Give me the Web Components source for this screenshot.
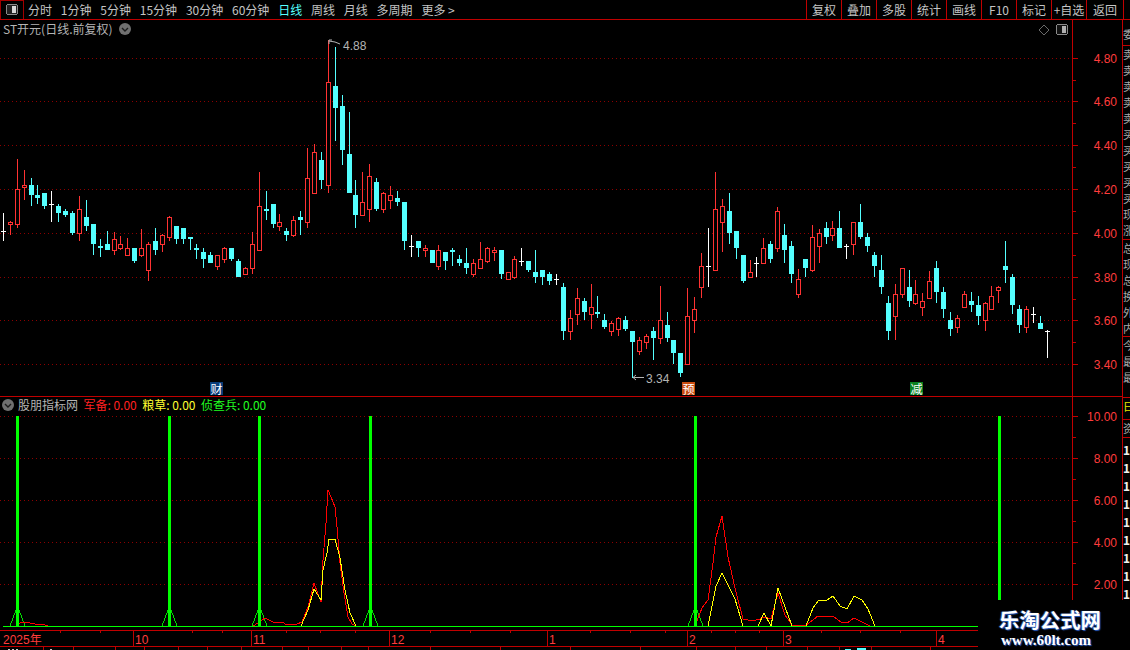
<!DOCTYPE html>
<html lang="zh-CN">
<head>
    <meta charset="UTF-8">
    <title>ST开元 K线</title>
    <style>
        html, body {
            margin: 0;
            height: 100%;
            background: #000;
            overflow: hidden;
        }
    </style>
</head>
<body>
<hq-app>
    <hq-toolbar slot="toolbar">
        <hq-tab slot="tabs">分时</hq-tab>
        <hq-tab slot="tabs">1分钟</hq-tab>
        <hq-tab slot="tabs">5分钟</hq-tab>
        <hq-tab slot="tabs">15分钟</hq-tab>
        <hq-tab slot="tabs">30分钟</hq-tab>
        <hq-tab slot="tabs">60分钟</hq-tab>
        <hq-tab slot="tabs" active>日线</hq-tab>
        <hq-tab slot="tabs">周线</hq-tab>
        <hq-tab slot="tabs">月线</hq-tab>
        <hq-tab slot="tabs">多周期</hq-tab>
        <hq-tab slot="tabs">更多 &gt;</hq-tab>
        <hq-tool slot="tools">复权</hq-tool>
        <hq-tool slot="tools">叠加</hq-tool>
        <hq-tool slot="tools">多股</hq-tool>
        <hq-tool slot="tools">统计</hq-tool>
        <hq-tool slot="tools">画线</hq-tool>
        <hq-tool slot="tools">F10</hq-tool>
        <hq-tool slot="tools">标记</hq-tool>
        <hq-tool slot="tools">+自选</hq-tool>
        <hq-tool slot="tools" wide>返回</hq-tool>
    </hq-toolbar>
    <hq-kline slot="kline"></hq-kline>
    <hq-indicator slot="indicator"></hq-indicator>
    <hq-time-axis slot="time"></hq-time-axis>
    <hq-status-strip slot="status"></hq-status-strip>
    <hq-side-strip slot="side"></hq-side-strip>
    <hq-watermark slot="watermark"></hq-watermark>
</hq-app>

<template id="app-tpl">
    <style>
        :host {
            display: grid;
            position: relative;
            width: 1130px;
            height: 650px;
            overflow: hidden;
            background: #000;
            font-family: "Noto Sans CJK SC", "Liberation Sans", sans-serif;
            font-size: 12px;
            grid-template-columns: 1123px 7px;
            grid-template-rows: 20px 377px 230px 20px 3px;
        }
        .top { grid-column: 1 / 3; grid-row: 1; }
        .kline { grid-column: 1; grid-row: 2; }
        .indicator { grid-column: 1; grid-row: 3; }
        .time { grid-column: 1 / 3; grid-row: 4; }
        .status { grid-column: 1 / 3; grid-row: 5; }
        .side { grid-column: 2; grid-row: 2 / 4; min-height: 0; overflow: hidden; }
    </style>
    <div class="top"><slot name="toolbar"></slot></div>
    <div class="kline"><slot name="kline"></slot></div>
    <div class="indicator"><slot name="indicator"></slot></div>
    <div class="time"><slot name="time"></slot></div>
    <div class="status"><slot name="status"></slot></div>
    <div class="side"><slot name="side"></slot></div>
    <slot name="watermark"></slot>
</template>

<template id="toolbar-tpl">
    <style>
        :host {
            display: flex;
            height: 20px;
            box-sizing: border-box;
            border-bottom: 1px solid #c00000;
            color: #c4c4c4;
        }
        .switch {
            box-sizing: border-box;
            width: 24px;
            height: 19px;
            border: solid #a00000;
            border-width: 1px 1px 0 1px;
            display: flex;
            align-items: center;
            justify-content: center;
        }
        .tabs {
            display: flex;
            align-items: center;
            gap: 8.8px;
            margin-left: 4px;
            flex: 1;
        }
        .tools {
            display: flex;
            margin-right: 6px;
            border-left: 1px solid #c00000;
        }
    </style>
    <div class="switch">
        <svg width="13" height="12" viewBox="0 0 13 12" shape-rendering="crispEdges">
            <rect x="0.5" y="0.5" width="11" height="10" rx="2" fill="#222" stroke="#8a8a8a"/>
            <rect x="6" y="2" width="4" height="7" fill="#d8d8d8"/>
        </svg>
    </div>
    <div class="tabs"><slot name="tabs"></slot></div>
    <div class="tools"><slot name="tools"></slot></div>
</template>

<template id="tab-tpl">
    <style>
        :host { display: block; line-height: 16px; white-space: nowrap; }
        :host([active]) { color: #55ffff; }
    </style>
    <slot></slot>
</template>

<template id="tool-tpl">
    <style>
        :host {
            display: flex;
            align-items: center;
            justify-content: center;
            box-sizing: border-box;
            width: 35px;
            border-right: 1px solid #c00000;
            white-space: nowrap;
        }
        :host([wide]) { width: 37px; }
    </style>
    <slot></slot>
</template>

<template id="toggle-tpl">
    <style>
        :host { display: block; width: 12px; height: 12px; }
        svg { display: block; }
    </style>
    <svg width="12" height="12" viewBox="0 0 12 12">
        <circle cx="6" cy="6" r="6" fill="#707070"/>
        <path d="M3 5 L6 8 L9 5" fill="none" stroke="#1c1c1c" stroke-width="1.4"/>
    </svg>
</template>

<template id="badge-tpl">
    <style>
        :host {
            position: absolute;
            width: 13px;
            height: 13px;
            display: flex;
            align-items: center;
            justify-content: center;
            color: #fff;
            font-size: 12px;
            line-height: 13px;
        }
    </style>
    <slot></slot>
</template>

<template id="kline-tpl">
    <style>
        :host {
            display: block;
            position: relative;
            height: 377px;
            box-sizing: border-box;
            border-bottom: 1px solid #c00000;
        }
        .row { display: flex; height: 376px; }
        svg.chart { display: block; flex: none; }
        .title {
            position: absolute;
            left: 3px;
            top: 1px;
            display: flex;
            align-items: center;
            gap: 6px;
            color: #b4b4b4;
            line-height: 16px;
        }
        .marks {
            position: absolute;
            left: 1038px;
            top: 4px;
            display: flex;
            align-items: center;
            gap: 6px;
        }
        svg text { font-family: "Liberation Sans", sans-serif; font-size: 12px; }
    </style>
    <div class="row">
        <svg class="chart" width="1072" height="376" viewBox="0 20 1072 376" shape-rendering="crispEdges"></svg>
        <hq-axis></hq-axis>
    </div>
    <div class="title"><span>ST开元(日线.前复权)</span><hq-toggle></hq-toggle></div>
    <div class="marks">
        <svg width="12" height="12" viewBox="0 0 12 12">
            <path d="M6 1 L11 6 L6 11 L1 6 Z" fill="none" stroke="#6a6a6a"/>
        </svg>
        <svg width="13" height="12" viewBox="0 0 13 12" shape-rendering="crispEdges">
            <rect x="0.5" y="0.5" width="11" height="10" rx="2" fill="#111" stroke="#8a8a8a"/>
            <rect x="6" y="2" width="4" height="7" fill="#b0b0b0"/>
        </svg>
    </div>
    <hq-badge style="left:210px;top:362px;background:#0a3c78">财</hq-badge>
    <hq-badge style="left:682px;top:362px;background:#c84b10">预</hq-badge>
    <hq-badge style="left:910px;top:362px;background:#0a8020">减</hq-badge>
</template>

<template id="axis-tpl">
    <style>
        :host {
            display: block;
            width: 51px;
            flex: none;
            box-sizing: border-box;
            border-left: 1px solid #c00000;
            border-right: 1px solid #c00000;
        }
        svg { display: block; }
        text { font-family: "Liberation Sans", sans-serif; font-size: 12px; fill: #ff3c3c; text-anchor: end; }
    </style>
    <svg width="49" shape-rendering="crispEdges"></svg>
</template>

<template id="indicator-tpl">
    <style>
        :host {
            display: block;
            position: relative;
            height: 230px;
        }
        .row { display: flex; height: 230px; }
        svg.chart { display: block; flex: none; }
        .legend {
            position: absolute;
            left: 2px;
            top: 0;
            display: flex;
            align-items: center;
            line-height: 16px;
            white-space: nowrap;
            color: #b4b4b4;
        }
        .legend span { margin-left: 5.4px; }
        .legend .name { margin-left: 4px; }
        .r { color: #ff2020; }
        .y { color: #ffff30; }
        .g { color: #20ff20; }
    </style>
    <div class="row">
        <svg class="chart" width="1072" height="230" viewBox="0 397 1072 230" shape-rendering="crispEdges"></svg>
        <hq-axis></hq-axis>
    </div>
    <div class="legend">
        <hq-toggle></hq-toggle>
        <span class="name">股朋指标网</span>
        <span class="r">军备: 0.00</span>
        <span class="y">粮草: 0.00</span>
        <span class="g">侦查兵: 0.00</span>
    </div>
</template>

<template id="time-tpl">
    <style>
        :host { display: block; height: 20px; }
        svg { display: block; }
        text { font-family: "Liberation Sans", "Noto Sans CJK SC", sans-serif; font-size: 12px; fill: #ff3c3c; }
    </style>
    <svg width="1130" height="20" viewBox="0 627 1130 20" shape-rendering="crispEdges"></svg>
</template>

<template id="status-tpl">
    <style>
        :host { display: block; height: 3px; }
        svg { display: block; }
    </style>
    <svg width="1130" height="3" viewBox="0 647 1130 3" shape-rendering="crispEdges"></svg>
</template>

<template id="side-tpl">
    <style>
        :host {
            display: flex;
            flex-direction: column;
            height: 607px;
            overflow: hidden;
            color: #a8a8a8;
            font-size: 11px;
            line-height: 16px;
            white-space: nowrap;
        }
        div { overflow: hidden; box-sizing: border-box; border-bottom: 1px solid #c00000; flex: none; }
        .hi { color: #f0f0f0; font-weight: 700; font-size: 12px; line-height: 18px; padding-top: 3px; }
        .yl { color: #e8e800; }
    </style>
    <div style="height:6px;border:0"></div>
    <div style="height:20px">委比</div>
    <div style="height:194px">卖五<br>卖四<br>卖三<br>卖二<br>卖一<br>买一<br>买二<br>买三<br>买四<br>买五<br>现价<br>涨跌</div>
    <div style="height:97px">总手<br>现手<br>总额<br>换手<br>外盘<br>内盘</div>
    <div style="height:61px">今开<br>最高<br>最低</div>
    <div style="height:22px" class="yl">日</div>
    <div style="height:18px">资</div>
    <div style="height:182px;border:0" class="hi">1<br>1<br>1<br>1<br>1<br>1<br>1<br>1<br>1</div>
</template>

<template id="watermark-tpl">
    <style>
        :host {
            position: absolute;
            left: 978px;
            top: 600px;
            width: 152px;
            height: 50px;
            background: #000;
            box-sizing: border-box;
            padding: 7px 0 0 21px;
            display: flex;
            flex-direction: column;
            color: #fff;
            white-space: nowrap;
        }
        .cn {
            font: 700 20.4px/24px "Noto Sans CJK SC", sans-serif;
            text-shadow: 1px 1px 1px #2a5cc0, -1px 0 1px #2a5cc0;
        }
        .en {
            font: 700 15px/17px "Liberation Serif", serif;
            margin: 1px 0 0 2px;
            text-shadow: 1px 1px 1px #2a5cc0;
        }
    </style>
    <span class="cn">乐淘公式网</span>
    <span class="en">www.60lt.com</span>
</template>

<script>
    const SVG_NS = 'http://www.w3.org/2000/svg';
    const RED = '#ff3232';
    const CYAN = '#54ffff';
    const LINE_RED = '#c00000';
    const DOT_RED = '#8c0000';

    function el(parent, name, attrs, text) {
        const node = document.createElementNS(SVG_NS, name);
        for (const key in attrs) node.setAttribute(key, attrs[key]);
        if (text !== undefined) node.textContent = text;
        parent.appendChild(node);
        return node;
    }

    function rect(parent, x, y, w, h, fill) {
        return el(parent, 'rect', {x, y, width: w, height: h, fill});
    }

    function dotted(parent, y, x1, x2) {
        el(parent, 'line', {
            x1, x2, y1: y + 0.5, y2: y + 0.5,
            stroke: DOT_RED, 'stroke-dasharray': '1 3'
        });
    }

    // kind, wick top, wick bottom, body top, body bottom (page pixels)
    const candles = [
        ['w',213,241,231,231],['r',221,235,222,225],['r',159,228,189,225],['r',170,200,185,188],
        ['c',178,206,185,195],['c',185,204,195,198],['c',193,209,193,206],['w',191,222,204,204],
        ['c',204,222,206,213],['c',209,217,211,215],['c',211,235,213,233],['r',196,241,209,234],
        ['c',200,231,217,226],['c',224,255,224,244],['c',239,257,246,248],['c',231,250,244,250],
        ['r',232,255,239,251],['r',236,250,244,249],['r',238,256,248,256],['c',248,263,248,261],
        ['r',229,257,248,256],['r',242,281,244,271],['c',228,255,241,250],['r',234,252,235,245],
        ['r',216,241,217,238],['c',226,244,226,239],['c',228,244,228,239],['c',237,250,237,239],
        ['c',244,259,248,250],['c',248,268,252,259],['c',252,263,255,263],['r',255,270,255,267],
        ['r',247,263,248,260],['c',248,261,248,259],['c',259,277,261,277],['r',267,275,268,275],
        ['r',232,274,244,269],['r',172,251,206,251],['c',191,220,209,211],['c',204,228,204,224],
        ['r',214,231,222,227],['c',228,241,231,235],['r',216,237,220,236],['c',211,235,217,220],
        ['r',148,228,178,223],['r',144,194,152,194],['c',152,189,160,180],['r',40,193,82,186],
        ['c',47,141,86,108],['c',95,165,106,150],['c',112,193,154,193],['c',180,228,195,215],
        ['r',172,216,202,216],['r',164,222,176,210],['c',178,211,182,209],['r',192,213,193,210],
        ['r',186,209,195,201],['c',191,206,198,202],['c',202,250,202,241],['w',235,257,246,246],
        ['c',241,257,241,248],['r',245,257,248,251],['c',250,263,250,263],['r',245,270,250,267],
        ['c',252,270,252,261],['c',248,266,250,252],['c',255,266,259,263],['c',248,274,263,268],
        ['r',259,277,263,275],['r',242,269,259,269],['r',247,263,248,262],['r',247,261,250,253],
        ['c',250,279,250,274],['r',272,280,272,280],['r',256,279,259,278],['w',248,266,261,261],
        ['c',261,272,261,270],['c',250,283,272,277],['c',270,285,270,277],['c',272,285,274,281],
        ['w',274,285,279,279],['c',283,340,287,331],['r',310,340,318,332],['r',288,325,298,315],
        ['c',298,320,301,312],['r',284,329,307,315],['c',296,318,312,314],['c',314,329,320,327],
        ['r',321,336,323,332],['r',317,336,318,330],['c',316,331,320,329],['c',331,378,331,342],
        ['r',337,355,340,352],['r',334,349,336,343],['c',327,360,331,338],['r',286,344,320,339],
        ['c',312,342,325,338],['c',340,364,340,353],['c',353,377,353,373],['r',288,365,316,365],
        ['r',297,333,309,321],['r',253,298,266,288],['w',228,287,266,266],['r',172,271,209,271],
        ['r',199,252,206,223],['c',193,244,211,233],['c',231,259,231,248],['c',255,283,255,281],
        ['r',260,278,272,278],['w',257,277,263,263],['r',238,264,248,264],['c',241,263,244,259],
        ['r',207,252,211,249],['c',224,263,235,250],['c',241,283,246,274],['r',269,298,279,295],
        ['c',259,277,259,268],['r',225,272,237,271],['r',229,263,233,247],['c',222,244,228,237],
        ['r',221,241,228,236],['c',211,248,228,248],['w',244,259,246,246],['r',222,255,222,245],
        ['c',204,239,222,237],['c',233,252,237,246],['c',252,277,255,266],['c',255,294,270,287],
        ['c',296,340,303,331],['r',284,340,294,317],['r',268,298,268,295],['c',270,307,287,301],
        ['r',280,305,294,304],['r',293,316,301,308],['r',271,299,281,299],['c',261,303,268,292],
        ['c',287,318,292,309],['c',312,336,320,329],['r',315,333,318,328],['r',291,308,294,308],
        ['c',292,312,301,305],['c',296,325,305,316],['r',302,331,303,321],['r',286,310,296,310],
        ['r',286,303,287,291],['c',241,283,266,270],['c',274,314,277,305],['c',305,333,309,325],
        ['r',306,333,309,328],['w',307,323,314,314],['c',316,329,323,329],['w',330,358,331,331]
    ];

    const redLines = [
        [[17,626],[20,623],[23,622],[30,623],[35,624],[42,624],[48,626]],
        [[253,626],[258,623],[265,618],[273,622],[282,622],[287,625],[297,624],[302,622],[308,607],[314,583],[321,602],[323,560],[326,523],[328,490],[331,497],[335,507],[337,527],[340,563],[344,593],[348,617],[352,624],[356,626]],
        [[696,623],[702,608],[708,600],[713,563],[716,537],[722,516],[728,557],[735,588],[743,619],[752,621],[760,619],[764,617],[771,619],[778,593],[785,615],[792,625],[805,626],[818,616],[827,617],[833,616],[841,622],[847,623],[854,618],[862,622],[870,626],[875,626]]
    ];
    const yellowLines = [
        [[301,626],[308,610],[314,589],[321,600],[323,570],[327,553],[329,539],[335,539],[340,558],[345,590],[350,613],[356,626]],
        [[708,626],[716,586],[722,573],[735,599],[743,626],[758,626],[764,613],[771,626],[778,588],[792,626],[806,626],[813,608],[819,600],[827,600],[833,596],[840,606],[847,609],[854,596],[862,600],[868,609],[875,626]]
    ];
    const signals = [16, 168, 258, 369, 694, 998];

    class ShadowBase extends HTMLElement {
        constructor() {
            super();
            const tpl = document.getElementById(this.constructor.tpl);
            this.attachShadow({mode: 'open'}).appendChild(tpl.content.cloneNode(true));
        }
    }

    class HqApp extends ShadowBase { static tpl = 'app-tpl'; }
    class HqToolbar extends ShadowBase { static tpl = 'toolbar-tpl'; }
    class HqTab extends ShadowBase { static tpl = 'tab-tpl'; }
    class HqTool extends ShadowBase { static tpl = 'tool-tpl'; }
    class HqToggle extends ShadowBase { static tpl = 'toggle-tpl'; }
    class HqBadge extends ShadowBase { static tpl = 'badge-tpl'; }
    class HqSideStrip extends ShadowBase { static tpl = 'side-tpl'; }
    class HqWatermark extends ShadowBase { static tpl = 'watermark-tpl'; }

    class HqAxis extends ShadowBase {
        static tpl = 'axis-tpl';

        // ticks: [[y, label]...], top/height describe the page area the svg covers
        draw(top, height, ticks, minors) {
            const svg = this.shadowRoot.querySelector('svg');
            svg.setAttribute('height', height);
            svg.setAttribute('viewBox', `1073 ${top} 49 ${height}`);
            ticks.forEach(([y, label]) => {
                rect(svg, 1073, y, 5, 1, LINE_RED);
                el(svg, 'text', {x: 1117, y: y + 5, 'shape-rendering': 'auto'}, label);
            });
            minors.forEach(y => rect(svg, 1073, y, 3, 1, LINE_RED));
        }
    }

    class HqKline extends ShadowBase {
        static tpl = 'kline-tpl';

        connectedCallback() {
            const svg = this.shadowRoot.querySelector('svg.chart');
            const grid = [[58, '4.80'], [101, '4.60'], [145, '4.40'], [189, '4.20'],
                [233, '4.00'], [277, '3.80'], [320, '3.60'], [364, '3.40']];
            grid.forEach(([y]) => dotted(svg, y, 0, 1072));
            candles.forEach((c, i) => this.drawCandle(svg, c, Math.floor(3.4 + 6.913 * i)));

            // high and low marks
            const grey = '#b4b4b4';
            el(svg, 'path', {d: 'M329 44 L329 40 L332 40 M329 41 L335 42 L340 44', fill: 'none', stroke: grey, 'shape-rendering': 'auto'});
            el(svg, 'text', {x: 343, y: 50, fill: grey, 'shape-rendering': 'auto'}, '4.88');
            el(svg, 'path', {d: 'M633 377.5 L644 377.5 M633 377.5 L636 375 M633 377.5 L636 380', fill: 'none', stroke: grey, 'shape-rendering': 'auto'});
            el(svg, 'text', {x: 646, y: 383, fill: grey, 'shape-rendering': 'auto'}, '3.34');

            const minors = [80, 123, 167, 211, 255, 299, 342];
            this.shadowRoot.querySelector('hq-axis').draw(20, 376, grid, minors);
        }

        drawCandle(svg, [kind, top, bottom, bodyTop, bodyBottom], x) {
            if (kind === 'w') {
                rect(svg, x, top, 1, bottom - top, '#fff');
                rect(svg, x - 2, bodyTop, 5, 1, '#fff');
                return;
            }
            const color = kind === 'r' ? RED : CYAN;
            rect(svg, x, top, 1, bottom - top, color);
            const h = Math.max(bodyBottom - bodyTop, 2);
            if (kind === 'c') {
                rect(svg, x - 2, bodyTop, 5, h, color);
            } else {
                el(svg, 'rect', {
                    x: x - 1.5, y: bodyTop + 0.5, width: 4, height: h - 1,
                    fill: '#000', stroke: color
                });
            }
        }
    }

    class HqIndicator extends ShadowBase {
        static tpl = 'indicator-tpl';

        connectedCallback() {
            const svg = this.shadowRoot.querySelector('svg.chart');
            const grid = [[416, '10.00'], [458, '8.00'], [500, '6.00'], [542, '4.00'], [584, '2.00']];
            grid.forEach(([y]) => dotted(svg, y, 0, 1072));

            const poly = (points, stroke) => el(svg, 'polyline', {
                points: points.map(p => p.join(',')).join(' '),
                fill: 'none', stroke, 'shape-rendering': 'crispEdges'
            });
            signals.forEach(x => {
                rect(svg, x - 6, 626, 15, 1, '#ffff00');
                poly([[x - 6, 626], [x, 610], [x + 3, 610], [x + 9, 626]], '#00e000');
            });
            redLines.forEach(points => poly(points, '#ff0000'));
            yellowLines.forEach(points => poly(points, '#ffff00'));
            signals.forEach(x => rect(svg, x, 416, 3, 211, '#00ff00'));
            rect(svg, 3, 626, 975, 1, '#00ff00');

            this.shadowRoot.querySelector('hq-axis').draw(397, 230, grid, [437, 479, 521, 563, 605]);
        }
    }

    class HqTimeAxis extends ShadowBase {
        static tpl = 'time-tpl';

        connectedCallback() {
            const svg = this.shadowRoot.querySelector('svg');
            rect(svg, 0, 630, 1130, 1, LINE_RED);
            rect(svg, 0, 646, 1130, 1, LINE_RED);
            const months = [[133, '10'], [251, '11'], [389, '12'], [547, '1'], [687, '2'], [783, '3'], [936, '4']];
            el(svg, 'text', {x: 3, y: 644, 'shape-rendering': 'auto'}, '2025年');
            months.forEach(([x, label]) => {
                rect(svg, x, 631, 1, 15, LINE_RED);
                el(svg, 'text', {x: x + 2, y: 644, 'shape-rendering': 'auto'}, label);
            });
            [60, 100, 192, 222, 286, 320, 355, 430, 470, 510, 590, 630, 665, 711, 735, 759, 821, 860, 900]
                .forEach(x => rect(svg, x, 631, 1, 2, LINE_RED));
        }
    }

    class HqStatusStrip extends ShadowBase {
        static tpl = 'status-tpl';

        connectedCallback() {
            const svg = this.shadowRoot.querySelector('svg');
            [43, 73, 115, 144, 178, 207, 241, 282, 308, 341, 368, 430, 500, 570, 640, 696, 735, 766, 807, 839, 871, 930]
                .forEach(x => rect(svg, x, 647, 1, 3, LINE_RED));
            [[8, 2], [12, 2], [16, 2], [50, 2]].forEach(([x, w]) => rect(svg, x, 649, w, 1, '#c8c8c8'));
            rect(svg, 845, 649, 6, 1, CYAN);
            rect(svg, 857, 648, 9, 2, CYAN);
        }
    }

    customElements.define('hq-app', HqApp);
    customElements.define('hq-toolbar', HqToolbar);
    customElements.define('hq-tab', HqTab);
    customElements.define('hq-tool', HqTool);
    customElements.define('hq-toggle', HqToggle);
    customElements.define('hq-badge', HqBadge);
    customElements.define('hq-axis', HqAxis);
    customElements.define('hq-kline', HqKline);
    customElements.define('hq-indicator', HqIndicator);
    customElements.define('hq-time-axis', HqTimeAxis);
    customElements.define('hq-status-strip', HqStatusStrip);
    customElements.define('hq-side-strip', HqSideStrip);
    customElements.define('hq-watermark', HqWatermark);
</script>
</body>
</html>
